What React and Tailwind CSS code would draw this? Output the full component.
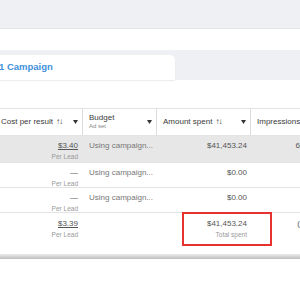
import { useState } from "react"

const SortIcon = () => (
    <span className="ml-[3px] text-[8px] tracking-[-1px]">↑↓</span>
)

const Caret = () => (
    <svg width="5" height="4" viewBox="0 0 5 4" className="shrink-0">
        <path d="M0 0 L5 0 L2.5 4 Z" fill="#333" />
    </svg>
)

const rows = [
    { cost: "$3.40", link: true, budget: "Using campaign...", spent: "$41,453.24", imp: "6", bg: "bg-[#e7e7e7]", h: "h-[27px]" },
    { cost: "—", budget: "Using campaign...", spent: "$0.00", bg: "bg-white", h: "h-[25px]" },
    { cost: "—", budget: "Using campaign...", spent: "$0.00", bg: "bg-white", h: "h-[25px]" },
]

const App = () => {
    const [tab] = useState("1 Campaign")

    return (
        <div className="w-[300px] h-[300px] overflow-hidden bg-white font-['Liberation_Sans',Arial,sans-serif]">
            {/* top bars */}
            <div className="h-[29px] bg-[#eef0f4] border-b border-[#e4e6ea]" />
            <div className="h-[21px] bg-white" />
            <div className="h-[30px] bg-[#eef0f4] pt-[5px] flex">
                <div className="w-[175px] h-[25px] bg-white rounded-tr-[5px] shadow-[0_1px_1px_rgba(0,0,0,0.08)] flex items-center">
                    <span className="text-[9.5px] font-bold text-[#3f92dc] -ml-[1px]">{tab}</span>
                </div>
            </div>
            <div className="h-[28px] bg-white" />

            {/* header */}
            <div className="flex h-[27px] border-t border-[#e2e2e2] bg-white text-[#3a3a3a] whitespace-nowrap overflow-hidden">
                <div className="w-[83px] shrink-0 flex items-center justify-between pl-[1px] pr-[4px] border-r border-[#dcdcdc]">
                    <span className="text-[8px] font-medium">Cost per result<SortIcon /></span>
                    <Caret />
                </div>
                <div className="w-[74px] shrink-0 flex items-center justify-between pl-[6px] pr-[4px] border-r border-[#dcdcdc]">
                    <div className="flex flex-col leading-[9px]">
                        <span className="text-[8px] font-medium">Budget</span>
                        <span className="text-[6px] text-[#888]">Ad set</span>
                    </div>
                    <Caret />
                </div>
                <div className="w-[94px] shrink-0 flex items-center justify-between pl-[6px] pr-[4px] border-r border-[#dcdcdc]">
                    <span className="text-[8px] font-medium">Amount spent<SortIcon /></span>
                    <Caret />
                </div>
                <div className="flex-1 min-w-0 flex items-center pl-[6px]">
                    <span className="text-[8px] font-medium">Impressions</span>
                </div>
            </div>

            {/* rows */}
            {rows.map((r, i) => (
                <div key={i} className={`flex ${r.h} ${r.bg} border-t border-[#e3e3e3] text-[#555] whitespace-nowrap`}>
                    <div className="w-[83px] shrink-0 flex flex-col items-end pr-[5px] pt-[4px] leading-[11px]">
                        <span className={`text-[8px] ${r.link ? "underline" : ""}`}>{r.cost}</span>
                        <span className="text-[6.5px] text-[#999]">Per Lead</span>
                    </div>
                    <div className="w-[74px] shrink-0 pl-[6px] pt-[4px] text-[8px] leading-[11px] text-[#777]">{r.budget}</div>
                    <div className="w-[94px] shrink-0 flex justify-end pr-[4px] pt-[4px] text-[8px] leading-[11px]">{r.spent}</div>
                    <div className="flex-1 flex justify-end pt-[4px] text-[8px] leading-[11px]">{r.imp}</div>
                </div>
            ))}

            {/* totals row */}
            <div className="relative flex h-[42px] bg-white border-t border-[#e3e3e3] text-[#555] whitespace-nowrap">
                <div className="w-[83px] shrink-0 flex flex-col items-end pr-[5px] pt-[5px] leading-[11px]">
                    <span className="text-[8px] underline">$3.39</span>
                    <span className="text-[6.5px] text-[#999]">Per Lead</span>
                </div>
                <div className="w-[74px] shrink-0" />
                <div className="w-[94px] shrink-0 flex flex-col items-end pr-[4px] pt-[5px] leading-[11px]">
                    <span className="text-[8px]">$41,453.24</span>
                    <span className="text-[6.5px] text-[#999]">Total spent</span>
                </div>
                <div className="flex-1 flex justify-end pt-[5px] text-[8px] leading-[11px]">(</div>
                <div className="absolute left-[182px] top-[-1px] w-[90px] h-[34px] border-2 border-[#e8322f]" />
            </div>

            <div className="h-[5px] bg-gradient-to-b from-[#ececec] to-[#bdbdbd]" />
        </div>
    )
}

export default App
